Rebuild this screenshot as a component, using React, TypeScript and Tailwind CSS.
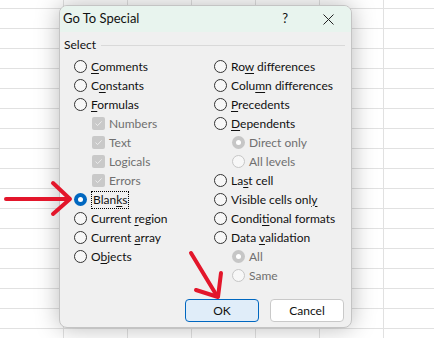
import React from 'react';

const cols = Array.from({ length: 7 });
const rows = Array.from({ length: 18 });

function Radio({ checked = false, disabled = false }: { checked?: boolean; disabled?: boolean }) {
  if (checked && !disabled) {
    return (
      <span className="flex h-[13px] w-[13px] shrink-0 items-center justify-center rounded-full bg-[#0067c0]">
        <span className="h-[5px] w-[5px] rounded-full bg-white" />
      </span>
    );
  }
  if (checked && disabled) {
    return (
      <span className="flex h-[13px] w-[13px] shrink-0 items-center justify-center rounded-full bg-[#c6c6c6]">
        <span className="h-[5px] w-[5px] rounded-full bg-white" />
      </span>
    );
  }
  return (
    <span
      className={
        disabled
          ? 'h-[13px] w-[13px] shrink-0 rounded-full border border-[#c6c6c6] bg-[#f7f7f7]'
          : 'h-[13px] w-[13px] shrink-0 rounded-full border border-[#333] bg-[#f7f7f7]'
      }
    />
  );
}

function Check() {
  return (
    <span className="flex h-[13px] w-[13px] shrink-0 items-center justify-center rounded-[2px] bg-[#c9c9c9]">
      <svg width="9" height="9" viewBox="0 0 9 9" fill="none">
        <path d="M1.5 4.6 L3.6 6.6 L7.6 2.4" stroke="#ececec" strokeWidth="1" />
      </svg>
    </span>
  );
}

// label with underlined accelerator letter
function L({ pre, u, post }: { pre: string; u: string; post: string }) {
  return (
    <span>
      {pre}
      <span className="underline underline-offset-[2px]">{u}</span>
      {post}
    </span>
  );
}

function Row({ children, indent = false }: { children: React.ReactNode; indent?: boolean }) {
  return <div className={indent ? 'flex h-[19px] items-center gap-[4px] pl-[18px]' : 'flex h-[19px] items-center gap-[4px]'}>{children}</div>;
}

export default function App() {
  return (
    <div className="relative h-[338px] w-[434px] overflow-hidden bg-white" style={{ fontFamily: 'Lato, "Noto Sans", sans-serif' }}>
      {/* sheet grid */}
      <div className="-mt-[11px] grid grid-cols-[repeat(7,64px)]">
        {rows.map((_, r) =>
          cols.map((_, c) => <div key={`${r}-${c}`} className="h-[20px] border-r border-b border-[#e1e1e1]" />)
        )}
      </div>

      {/* dialog */}
      <div className="absolute top-[5px] left-[59px] flex h-[323px] w-[293px] flex-col overflow-hidden rounded-[8px] border border-[#c4c4c4] bg-[#f0f0f0] text-[12px] text-[#111] shadow-[0_0_24px_rgba(0,0,0,0.28)]">
        <div className="flex h-[26px] items-center bg-[#e8f4ee] pl-[3px]">
          <span className="text-[13px]">Go To Special</span>
          <span className="ml-auto text-[13px]">?</span>
          <svg className="mr-[17px] ml-[35px]" width="11" height="11" viewBox="0 0 11 11">
            <path d="M0.5 0.5 L10.5 10.5 M10.5 0.5 L0.5 10.5" stroke="#222" strokeWidth="1" />
          </svg>
        </div>

        <div className="flex items-center gap-[5px] pt-[4px] pl-[4px] pr-[6px]">
          <span>Select</span>
          <span className="h-px flex-1 bg-[#d9d9d9]" />
        </div>

        <div className="mt-[3px] grid grid-cols-[140px_1fr] pl-[14px]">
          <div className="flex flex-col">
            <Row><Radio /><L pre="" u="C" post="omments" /></Row>
            <Row><Radio /><L pre="C" u="o" post="nstants" /></Row>
            <Row><Radio /><L pre="" u="F" post="ormulas" /></Row>
            <Row indent><Check /><span className="text-[#6f6f6f]">Numbers</span></Row>
            <Row indent><Check /><span className="text-[#6f6f6f]">Text</span></Row>
            <Row indent><Check /><span className="text-[#6f6f6f]">Logicals</span></Row>
            <Row indent><Check /><span className="text-[#6f6f6f]">Errors</span></Row>
            <Row>
              <Radio checked />
              <span className="border border-dotted border-black px-px leading-[16px]">
                <L pre="Blan" u="k" post="s" />
              </span>
            </Row>
            <Row><Radio /><L pre="Current " u="r" post="egion" /></Row>
            <Row><Radio /><L pre="Current " u="a" post="rray" /></Row>
            <Row><Radio /><L pre="O" u="b" post="jects" /></Row>
          </div>
          <div className="flex flex-col">
            <Row><Radio /><L pre="Ro" u="w" post=" differences" /></Row>
            <Row><Radio /><L pre="Colu" u="m" post="n differences" /></Row>
            <Row><Radio /><L pre="" u="P" post="recedents" /></Row>
            <Row><Radio /><L pre="" u="D" post="ependents" /></Row>
            <Row indent><Radio checked disabled /><span className="text-[#6f6f6f]">Direct only</span></Row>
            <Row indent><Radio disabled /><span className="text-[#6f6f6f]">All levels</span></Row>
            <Row><Radio /><L pre="La" u="s" post="t cell" /></Row>
            <Row><Radio /><L pre="Visible cells onl" u="y" post="" /></Row>
            <Row><Radio /><L pre="Condi" u="t" post="ional formats" /></Row>
            <Row><Radio /><L pre="Data " u="v" post="alidation" /></Row>
            <Row indent><Radio checked disabled /><span className="text-[#6f6f6f]">All</span></Row>
            <Row indent><Radio disabled /><span className="text-[#6f6f6f]">Same</span></Row>
          </div>
        </div>

        <div className="mt-auto flex justify-end gap-[11px] pr-[7px] pb-[5px]">
          <button className="h-[23px] w-[74px] rounded-[4px] border border-[#0067c0] bg-[#e0edf9]">OK</button>
          <button className="h-[23px] w-[74px] rounded-[4px] border border-[#c9c9c9] bg-white">Cancel</button>
        </div>
      </div>

      {/* red annotation arrows */}
      <svg className="absolute top-0 left-0" width="434" height="338" viewBox="0 0 434 338" fill="none">
        <g stroke="#e3162b" strokeWidth="4" strokeLinecap="round" strokeLinejoin="round">
          <path d="M6 199 L68 199" />
          <path d="M53 183 L70 199 L53 214" />
          <path d="M191 253 L217 296" />
          <path d="M196 290 L218 297 L221 273" />
        </g>
      </svg>
    </div>
  );
}
